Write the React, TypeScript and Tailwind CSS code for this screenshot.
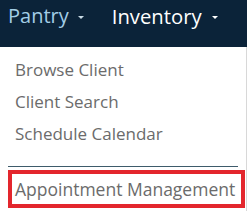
export default function App() {
  const items = ['Browse Client', 'Client Search', 'Schedule Calendar']

  return (
    <div className="w-[250px] h-[211px] bg-white overflow-hidden" style={{ fontFamily: '"Open Sans", "Noto Sans", sans-serif' }}>
      <div className="w-[247px] h-[47px] bg-[#0b2339] flex items-start pt-[2px]">
        <div className="flex items-center pl-[8px] text-[20px] leading-[28px] text-[#a3cde6]">
          Pantry
          <span className="ml-[9px] mt-[2px] border-x-[3px] border-t-[3px] border-x-transparent border-t-[#c9dbe6]" />
        </div>
        <div className="flex items-center ml-[28px] text-[20.3px] leading-[28px] text-white">
          Inventory
          <span className="ml-[10px] mt-[2px] border-x-[3px] border-t-[3px] border-x-transparent border-t-white" />
        </div>
      </div>
      <div className="w-[247px] border-r border-[#d8d8d8] h-[164px] pt-[7px]">
        <ul className="text-[17px] leading-[32px] text-[#6b6b6b]">
          {items.map((item) => (
            <li key={item} className="pl-[15px]">{item}</li>
          ))}
        </ul>
        <div className="mx-[8px] mt-[16px] border-t border-[#3e5b6b]" />
        <div className="ml-[8px] mr-[1px] mt-[3px] border-[4px] border-[#e3262d] pl-[3px] h-[38px] flex items-center whitespace-nowrap text-[17.5px] text-[#6b6b6b]">
          Appointment Management
        </div>
      </div>
    </div>
  )
}
